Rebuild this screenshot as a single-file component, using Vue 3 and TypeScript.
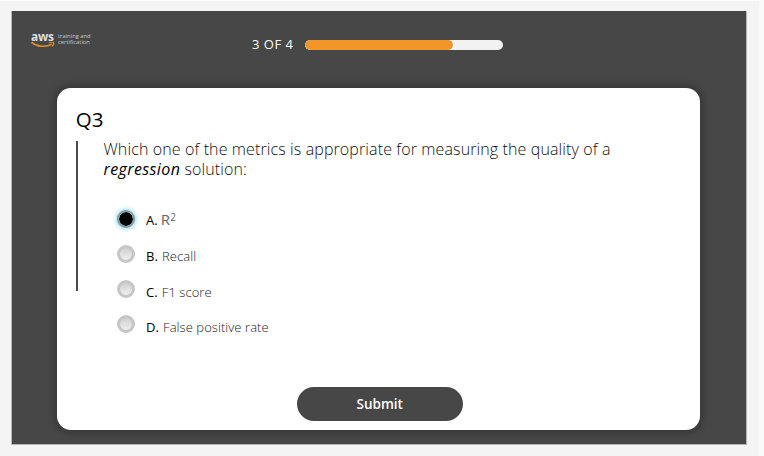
<script setup lang="ts">
import { ref } from 'vue'

interface Option {
  letter: string
  text: string
  sup?: string
}

const current = 3
const total = 4
const options: Option[] = [
  { letter: 'A', text: 'R', sup: '2' },
  { letter: 'B', text: 'Recall' },
  { letter: 'C', text: 'F1 score' },
  { letter: 'D', text: 'False positive rate' },
]
const selected = ref('A')
</script>

<template>
  <div class="page">
    <main class="player">
      <header class="top">
        <div class="brand">
          <div class="mark">
            <span class="aws">aws</span>
            <svg class="smile" viewBox="0 0 24 8" width="24" height="8">
              <path d="M0.5 0.3 C6 5 15 5.4 20.6 2.3" fill="none" stroke="#e08e22" stroke-width="1.6" />
              <path d="M18.2 0.6 C20.4 -0.1 22.2 0 22.6 0.6 C22.9 1.5 22.2 3.4 20.9 4.5" fill="none" stroke="#e08e22" stroke-width="1.3" />
            </svg>
          </div>
          <div class="program">training and certification</div>
        </div>
        <span class="count">{{ current }} OF {{ total }}</span>
        <div class="track"><div class="fill" :style="{ width: (current / total) * 100 + '%' }"></div></div>
      </header>

      <section class="card">
        <h1>Q{{ current }}</h1>
        <div class="body">
          <p class="question">
            Which one of the metrics is appropriate for measuring the quality of a
            <em>regression</em> solution:
          </p>
          <ul class="options">
            <li v-for="o in options" :key="o.letter" @click="selected = o.letter">
              <span class="radio" :class="{ on: selected === o.letter }"></span>
              <span class="label" :class="'opt-' + o.letter"><b>{{ o.letter }}.</b><span class="answer">{{ o.text }}<sup v-if="o.sup">{{ o.sup }}</sup></span></span>
            </li>
          </ul>
        </div>
        <button class="submit" type="button">Submit</button>
      </section>
    </main>
  </div>
</template>

<style>
body {
  background: #fafafa;
}
</style>

<style scoped>
.page {
  box-sizing: border-box;
  width: 759px;
  height: 456px;
  padding: 10px 0 0 12px;
  background: #f4f4f4;
  border-top: 1px solid #fcfcfc;
  font-family: 'Open Sans', 'Noto Sans', sans-serif;
}
.player {
  box-sizing: border-box;
  width: 734px;
  height: 433px;
  background: #474747;
  box-shadow: 0 0 0 1px #b5b5b5;
  clip-path: inset(0 -1px -1px -1px);
}
.top {
  display: flex;
  align-items: flex-start;
  height: 77px;
  color: #fff;
}
.brand {
  display: flex;
  width: 221px;
  padding: 18px 0 0 19px;
  gap: 3px;
}
.mark {
  display: flex;
  flex-direction: column;
  width: 24px;
}
.aws {
  height: 13px;
  font-size: 12px;
  line-height: 15px;
  font-weight: 700;
  letter-spacing: -0.3px;
  color: #dedede;
}
.smile {
  display: block;
}
.program {
  width: 38px;
  padding-top: 4px;
  font-size: 5.8px;
  line-height: 6px;
  font-weight: 500;
  color: #cacaca;
}
.count {
  width: 53.4px;
  margin-top: 24px;
  font-size: 13px;
  line-height: 18px;
  letter-spacing: 0.5px;
  white-space: nowrap;
}
.track {
  width: 197.4px;
  height: 10px;
  margin-top: 28.5px;
  border-radius: 5px;
  background: #f2f2f2;
  overflow: hidden;
}
.fill {
  height: 100%;
  border-radius: 5px;
  background: #f29629;
}
.card {
  box-sizing: border-box;
  width: 643px;
  height: 342px;
  margin-left: 45.4px;
  padding: 17px 0 0 18.3px;
  border-radius: 14px;
  background: #fff;
  box-shadow: 0 0 6px 4px rgba(0, 0, 0, 0.19);
}
h1 {
  height: 36px;
  margin: 0;
  font-size: 20.5px;
  line-height: 28px;
  font-weight: 400;
  color: #000;
}
.body {
  box-sizing: border-box;
  height: 150px;
  border-left: 2px solid #4a4a4a;
  padding-left: 25.8px;
}
.question {
  position: relative;
  top: -2px;
  width: 520px;
  margin: 0;
  font-size: 16px;
  line-height: 20px;
  font-weight: 300;
  letter-spacing: 0.115px;
  color: #111;
}
em {
  font-weight: 500;
  letter-spacing: 0.38px;
  color: #000;
}
.options {
  display: flex;
  flex-direction: column;
  margin: 0;
  padding: 20.5px 0 0 14px;
  list-style: none;
}
li {
  display: flex;
  align-items: center;
  height: 35px;
  gap: 10.6px;
}
.radio {
  box-sizing: border-box;
  width: 18px;
  height: 18px;
  border: 3px solid #c6c6c6;
  border-radius: 50%;
  background: linear-gradient(#cecece, #f0f0f0);
}
.radio.on {
  border: 2.5px solid #829da5;
  background: #000;
  background-clip: padding-box;
  box-shadow: 0 0 4px 1px #8cd8ec;
}
.label {
  display: flex;
  align-items: baseline;
  gap: 4px;
  font-size: 13px;
  line-height: 18px;
  letter-spacing: 0.06px;
  white-space: nowrap;
  padding-top: 3px;
}
b {
  font-weight: 500;
  color: #000;
}
.answer {
  font-weight: 300;
  color: #222;
}
.opt-A {
  gap: 3px;
  padding-top: 1px;
}
.opt-C,
.opt-D {
  padding-top: 5px;
}
.opt-A .answer {
  font-size: 15px;
  font-weight: 500;
  color: #666;
}
sup {
  font-size: 10px;
  line-height: 0;
  vertical-align: 4px;
}
.submit {
  display: block;
  width: 166px;
  height: 34px;
  margin: 96px 0 0 221px;
  padding: 0;
  border: 0;
  border-radius: 17px;
  background: #474747;
  color: #fff;
  font: 600 13.5px/34px 'Open Sans', sans-serif;
}
</style>
